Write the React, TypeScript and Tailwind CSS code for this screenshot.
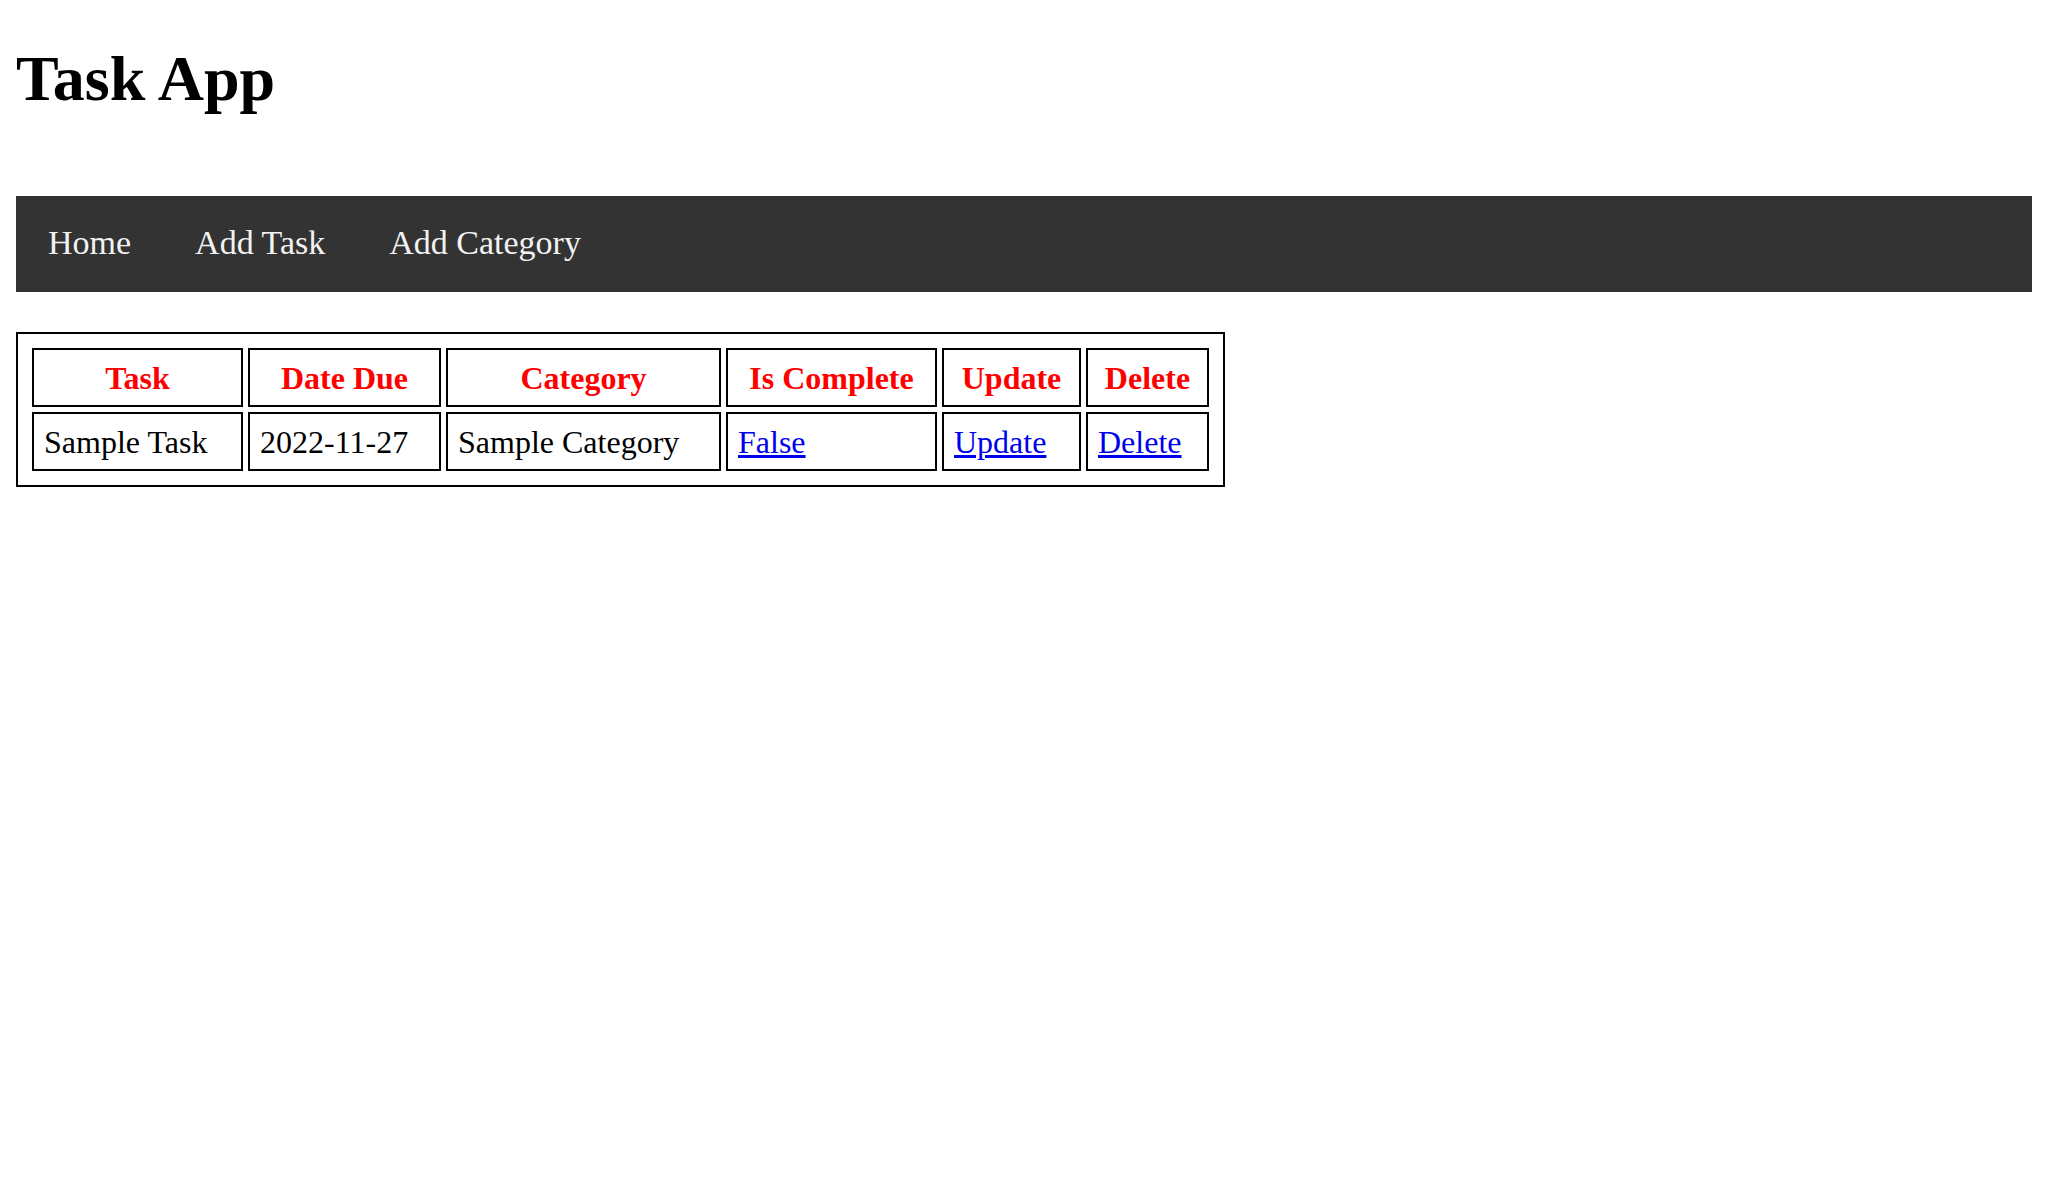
import React from "react";

const cols = [
  { head: "Task", w: "w-[211px]" },
  { head: "Date Due", w: "w-[193px]" },
  { head: "Category", w: "w-[275px]" },
  { head: "Is Complete", w: "w-[211px]" },
  { head: "Update", w: "w-[139px]" },
  { head: "Delete", w: "w-[123px]" },
];

export default function App() {
  const cell = "h-[59px] border-2 border-black flex items-center";
  return (
    <div
      className="min-h-screen bg-white text-black px-[16px] pt-[44px]"
      style={{ fontFamily: '"Liberation Serif", "Times New Roman", serif' }}
    >
      <h1 className="text-[64px] leading-[70px] font-bold">Task App</h1>

      <nav className="mt-[82px] h-[96px] bg-[#333333] flex items-start pt-[28px]">
        {["Home", "Add Task", "Add Category"].map((t) => (
          <a
            key={t}
            href="#"
            className="px-[32px] text-[34px] leading-[38px] text-[#f2f2f2]"
          >
            {t}
          </a>
        ))}
      </nav>

      <div className="mt-[40px] w-[1209px] border-2 border-black p-[14px]">
        <div className="grid grid-cols-[211px_193px_275px_211px_139px_123px] gap-[5px] text-[32px]">
          {cols.map((c) => (
            <div
              key={c.head}
              className={`${cell} justify-center font-bold text-[#ff0000] leading-[36px]`}
            >
              {c.head}
            </div>
          ))}
          <div className={`${cell} pl-[10px] leading-[36px]`}>Sample Task</div>
          <div className={`${cell} pl-[10px] leading-[36px]`}>2022-11-27</div>
          <div className={`${cell} pl-[10px] leading-[36px]`}>Sample Category</div>
          <div className={`${cell} pl-[10px] leading-[36px]`}>
            <a href="#" className="text-[#0000ee] underline">
              False
            </a>
          </div>
          <div className={`${cell} pl-[10px] leading-[36px]`}>
            <a href="#" className="text-[#0000ee] underline">
              Update
            </a>
          </div>
          <div className={`${cell} pl-[10px] leading-[36px]`}>
            <a href="#" className="text-[#0000ee] underline">
              Delete
            </a>
          </div>
        </div>
      </div>
    </div>
  );
}
